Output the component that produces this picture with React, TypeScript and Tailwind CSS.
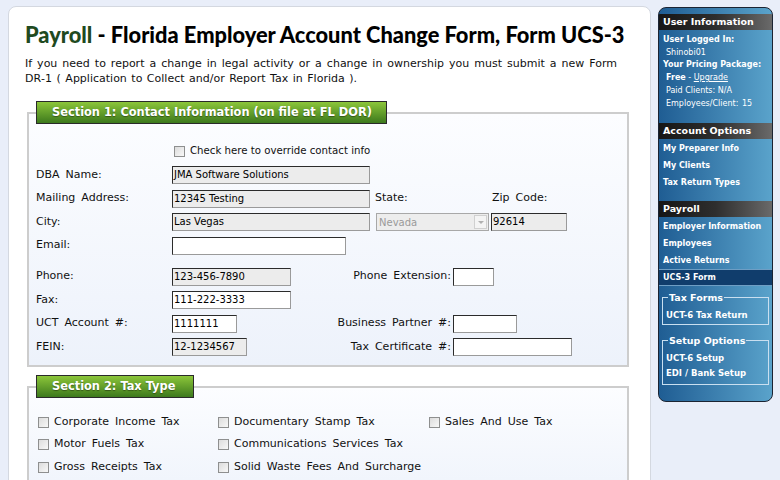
import React from "react";

const labelFont = { fontFamily: '"DejaVu Sans", Verdana, sans-serif' };

const Box = ({ w, value = "", gray = false }: { w: string; value?: string; gray?: boolean }) => (
  <div
    className={`${w} h-[18px] border border-[#2b2b2b] border-r-[#9a9a9a] border-b-[#9a9a9a] px-[1px] text-[10px] leading-[16px] text-black whitespace-nowrap overflow-hidden ${
      gray ? "bg-[#ececec]" : "bg-white"
    }`}
    style={{ wordSpacing: "normal" }}
  >
    {value}
  </div>
);

const Check = () => (
  <span className="inline-block w-[11px] h-[11px] border border-[#8e8f8f] bg-gradient-to-br from-[#dcdcdc] to-[#f8f8f8] shrink-0" />
);

const Legend = ({ children, w }: { children: React.ReactNode; w: string }) => (
  <legend
    className={`${w} h-[23px] border border-[#2a2a2a] bg-gradient-to-b from-[#8cc63a] to-[#3d7a1d] text-white font-bold text-[11.4px] leading-[21px] pl-[15px] whitespace-nowrap`}
    style={{ textShadow: "0 1px 1px rgba(0,0,0,0.4)" }}
  >
    {children}
  </legend>
);

const SideHeader = ({ children }: { children: React.ReactNode }) => (
  <div className="h-[16px] bg-gradient-to-r from-[#161616] via-[#2e2e2e] to-[#6a6a6a] text-white font-bold text-[9.5px] leading-[16px] pl-[4px]">
    {children}
  </div>
);

const SideLink = ({ children }: { children: React.ReactNode }) => (
  <div className="h-[17px] text-white font-bold text-[8px] leading-[17px] pl-[4px]">{children}</div>
);

export default function App() {
  return (
    <div className="h-[480px] w-[780px] overflow-hidden bg-[#e9eef9] flex gap-[7px] pl-[8px] pt-[6px]" style={labelFont}>
      {/* Main card */}
      <div className="w-[643px] h-[500px] bg-white border border-[#d4d8e0] rounded-[8px] pl-[16px] pt-[14px]">
        <h1
          className="text-[21.8px] font-black leading-[28px] text-black whitespace-nowrap"
          style={{ fontFamily: 'Lato, "Noto Sans", sans-serif' }}
        >
          <span className="text-[#1f4a1f]">Payroll</span> - Florida Employer Account Change Form, Form UCS-3
        </h1>
        <p
          className="mt-[7px] w-[592px] text-[11px] leading-[15px] text-[#111] text-justify [text-align-last:left]"
          style={{ wordSpacing: "1px" }}
        >
          If you need to report a change in legal activity or a change in ownership you must submit a new Form DR‑1 ( Application to Collect and/or Report Tax in Florida ).
        </p>

        {/* Section 1 */}
        <fieldset className="mt-[15px] ml-[2px] w-[602px] border-2 border-[#cdcdcd] bg-gradient-to-b from-[#fcfdff] to-[#edf2fb] pl-[7px] pb-[9px] text-[11px] text-[#111]">
          <Legend w="w-[351px]">Section 1: Contact Information (on file at FL DOR)</Legend>
          <div className="flex items-center gap-[5px] ml-[138px] mt-[18px] h-[18px] text-[10.2px]">
            <Check />
            <span>Check here to override contact info</span>
          </div>
          <div className="flex flex-col gap-[5.5px] mt-[6px]" style={{ wordSpacing: "2.5px" }}>
            <div className="flex items-center">
              <span className="w-[136px]">DBA Name:</span>
              <Box w="w-[198px]" value="JMA Software Solutions" gray />
            </div>
            <div className="flex items-center">
              <span className="w-[136px]">Mailing Address:</span>
              <Box w="w-[198px]" value="12345 Testing" gray />
              <span className="w-[122px] pl-[5px]">State:</span>
              <span>Zip Code:</span>
            </div>
            <div className="flex items-center">
              <span className="w-[136px]">City:</span>
              <Box w="w-[198px]" value="Las Vegas" gray />
              <div className="ml-[6px] w-[113px] h-[18px] border border-[#a8a8a8] bg-[#ededed] flex items-center justify-between text-[10px] text-[#9a9a9a] pl-[2px]">
                <span>Nevada</span>
                <span className="w-[13px] h-[14px] mr-[1px] border border-[#d0d0d0] bg-[#f4f4f4] flex items-center justify-center">
                  <span className="w-0 h-0 border-l-[3px] border-r-[3px] border-t-[3px] border-l-transparent border-r-transparent border-t-[#b0b0b0]" />
                </span>
              </div>
              <div className="ml-[2px]">
                <Box w="w-[76px]" value="92614" gray />
              </div>
            </div>
            <div className="flex items-center">
              <span className="w-[136px]">Email:</span>
              <Box w="w-[174px]" />
            </div>
            <div className="flex items-center mt-[7.5px]">
              <span className="w-[136px]">Phone:</span>
              <Box w="w-[119px]" value="123-456-7890" gray />
              <span className="w-[162px] text-right pr-[2px]">Phone Extension:</span>
              <Box w="w-[41px]" />
            </div>
            <div className="flex items-center">
              <span className="w-[136px]">Fax:</span>
              <Box w="w-[119px]" value="111-222-3333" />
            </div>
            <div className="flex items-center">
              <span className="w-[136px]">UCT Account #:</span>
              <Box w="w-[65px]" value="1111111" />
              <span className="w-[216px] text-right pr-[2px]">Business Partner #:</span>
              <Box w="w-[64px]" />
            </div>
            <div className="flex items-center">
              <span className="w-[136px]">FEIN:</span>
              <Box w="w-[75px]" value="12-1234567" gray />
              <span className="w-[206px] text-right pr-[2px]">Tax Certificate #:</span>
              <Box w="w-[119px]" />
            </div>
          </div>
        </fieldset>

        {/* Section 2 */}
        <fieldset className="mt-[8px] ml-[2px] w-[602px] h-[140px] border-2 border-[#cdcdcd] bg-gradient-to-b from-[#fcfdff] to-[#edf2fb] pl-[7px] text-[11px] text-[#111]">
          <Legend w="w-[158px]">Section 2: Tax Type</Legend>
          <div
            className="grid grid-cols-[180px_211px_160px] gap-y-[6.5px] mt-[16px] ml-[2px]"
            style={{ wordSpacing: "2.5px" }}
          >
            {[
              "Corporate Income Tax",
              "Documentary Stamp Tax",
              "Sales And Use Tax",
              "Motor Fuels Tax",
              "Communications Services Tax",
              "",
              "Gross Receipts Tax",
              "Solid Waste Fees And Surcharge",
              "",
            ].map((t, i) => (
              <div key={i} className="flex items-center gap-[5px] h-[16px]">
                {t && <Check />}
                {t && <span>{t}</span>}
              </div>
            ))}
          </div>
        </fieldset>
      </div>

      {/* Sidebar */}
      <div className="mt-[1px] w-[115px] h-[395px] rounded-[8px] border border-[#1b2433] bg-gradient-to-r from-[#1f5d93] to-[#5aa3cb] overflow-hidden pt-[6px] text-white">
        <SideHeader>User Information</SideHeader>
        <div className="pl-[4px] pt-[4px] text-[8px] leading-[12.7px]">
          <div className="font-bold">User Logged In:</div>
          <div className="pl-[3px]">Shinobi01</div>
          <div className="font-bold">Your Pricing Package:</div>
          <div className="pl-[3px]">
            <span className="font-bold">Free</span> - <span className="underline">Upgrade</span>
          </div>
          <div className="pl-[3px]">Paid Clients: N/A</div>
          <div className="pl-[3px]" style={{ wordSpacing: "1px" }}>Employees/Client: 15</div>
        </div>
        <div className="h-[13px]" />
        <SideHeader>Account Options</SideHeader>
        <div className="pt-[1px]">
          <SideLink>My Preparer Info</SideLink>
          <SideLink>My Clients</SideLink>
          <SideLink>Tax Return Types</SideLink>
        </div>
        <div className="h-[10px]" />
        <SideHeader>Payroll</SideHeader>
        <div className="pt-[1px]">
          <SideLink>Employer Information</SideLink>
          <SideLink>Employees</SideLink>
          <SideLink>Active Returns</SideLink>
        </div>
        <div className="h-[17px] bg-[#103d6c] border-t border-b border-[#6f9ec4] text-white font-bold text-[8px] leading-[15px] pl-[4px]">
          UCS-3 Form
        </div>
        <fieldset className="mx-[3px] mt-[6px] border border-[#c9dff0] pl-[3px] pb-[2px]">
          <legend className="ml-[2px] px-[1px] text-[9.5px] font-bold leading-[11px]">Tax Forms</legend>
          <div className="text-[8.5px] font-bold leading-[14px] mt-[5px]">UCT-6 Tax Return</div>
        </fieldset>
        <fieldset className="mx-[3px] mt-[10px] border border-[#c9dff0] pl-[3px] pb-[3px]">
          <legend className="ml-[2px] px-[1px] text-[9.5px] font-bold leading-[11px]">Setup Options</legend>
          <div className="text-[8.5px] font-bold leading-[15px] mt-[5px]">UCT-6 Setup</div>
          <div className="text-[8.5px] font-bold leading-[15px]">EDI / Bank Setup</div>
        </fieldset>
      </div>
    </div>
  );
}
